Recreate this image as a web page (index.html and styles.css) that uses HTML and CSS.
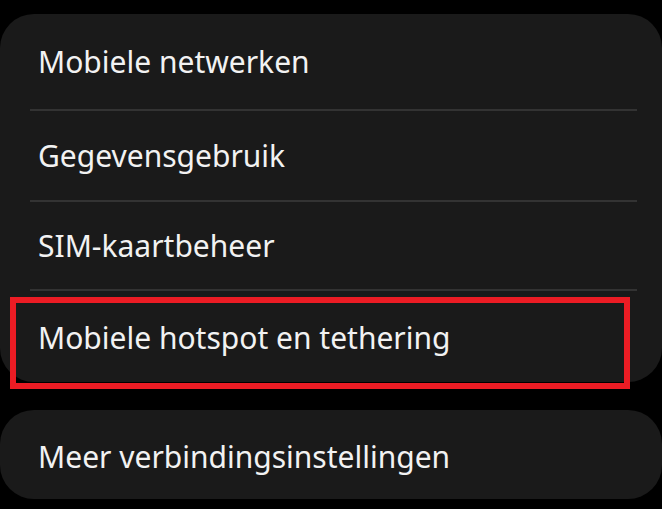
FILE: index.html
```html
<!DOCTYPE html>
<html lang="nl">
<head>
<meta charset="utf-8">
<link rel="stylesheet" href="styles.css">
</head>
<body>
<main class="page">
  <section class="card card-main">
    <div class="row row-1">Mobiele netwerken</div>
    <div class="divider"></div>
    <div class="row row-2">Gegevensgebruik</div>
    <div class="divider"></div>
    <div class="row row-3">SIM-kaartbeheer</div>
    <div class="divider"></div>
    <div class="row row-4">Mobiele hotspot en tethering</div>
    <div class="highlight"></div>
  </section>
  <section class="card card-more">
    <div class="row row-single">Meer verbindingsinstellingen</div>
  </section>
</main>
</body>
</html>
```
FILE: styles.css
```css
html, body {
  margin: 0;
  padding: 0;
  background: #000;
}
body {
  width: 662px;
  height: 509px;
  overflow: hidden;
  font-family: "Noto Sans", Roboto, Arial, sans-serif;
}
.page {
  display: flex;
  flex-direction: column;
  gap: 28px;
  padding-top: 14px;
}
.card {
  background: #1a1a1a;
  border-radius: 34px;
  position: relative;
}
.row {
  display: flex;
  align-items: center;
  box-sizing: border-box;
  padding-left: 38px;
  color: #f2f2f2;
  font-size: 30px;
  line-height: 1;
}
.row-1 { height: 95px; }
.row-2 { height: 89px; }
.row-3 { height: 87px; }
.row-4 { height: 91px; padding-top: 2px; }
.row-single { height: 89px; padding-top: 4px; }
.divider {
  height: 2px;
  background: #333;
  margin: 0 25px 0 30px;
}
.highlight {
  position: absolute;
  left: 10px;
  top: 283px;
  width: 608px;
  height: 80px;
  border: 6px solid #ec1c24;
  pointer-events: none;
}
```
